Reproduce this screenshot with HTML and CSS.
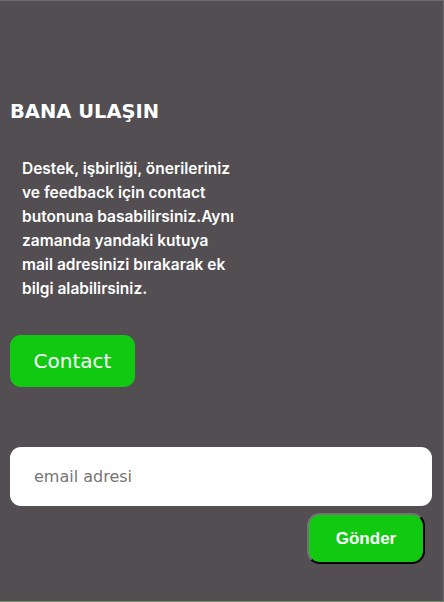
FILE: index.html
```html
<!DOCTYPE html>
<html lang="tr">
<head>
<meta charset="utf-8">
<link rel="stylesheet" href="styles.css">
</head>
<body>
<section class="contact">
  <h2 class="title">BANA ULAŞIN</h2>
  <p class="text">Destek, işbirliği, önerileriniz ve feedback için contact butonuna basabilirsiniz.Aynı zamanda yandaki kutuya mail adresinizi bırakarak ek bilgi alabilirsiniz.</p>
  <button class="contact-btn">Contact</button>
  <form class="mail-form">
    <input class="mail-input" type="text" placeholder="email adresi">
    <button class="send-btn" type="button">Gönder</button>
  </form>
</section>
</body>
</html>
```
FILE: styles.css
```css
html, body {
  margin: 0;
  height: 100%;
}
body {
  background: #524e52;
  font-family: "DejaVu Sans", sans-serif;
  border-top: 1px solid #6e6a6e;
  border-right: 1px solid #6e6a6e;
  border-bottom: 1px solid #6f8f6a;
  box-sizing: border-box;
}
.contact {
  padding: 0 11px 0 10px;
  display: flex;
  flex-direction: column;
}
.title {
  margin: 98px 0 0;
  color: #fff;
  font-size: 19.5px;
  font-weight: 700;
  line-height: 26px;
}
.text {
  margin: 32px 0 0 12px;
  width: 218px;
  color: #fff;
  font-family: Inter, "DejaVu Sans", sans-serif;
  font-size: 15.5px;
  font-weight: 600;
  line-height: 24px;
}
.contact-btn {
  margin-top: 34px;
  align-self: flex-start;
  width: 125px;
  height: 52px;
  border: none;
  border-radius: 11px;
  background: #12c912;
  color: #fff;
  font-family: "DejaVu Sans", sans-serif;
  font-size: 20px;
}
.mail-form {
  margin-top: 60px;
  display: flex;
  flex-direction: column;
}
.mail-input {
  height: 59px;
  box-sizing: border-box;
  border: none;
  border-radius: 11px;
  background: #fff;
  padding: 0 24px;
  font-family: "DejaVu Sans", sans-serif;
  font-size: 16px;
  outline: none;
}
.mail-input::placeholder {
  color: #757575;
}
.send-btn {
  margin: 7px 7px 0 0;
  align-self: flex-end;
  width: 118px;
  height: 51px;
  border: 2px outset #767276;
  border-right-color: #2c2a2c;
  border-bottom-color: #2c2a2c;
  border-radius: 13px;
  background: #12c912;
  color: #fff;
  font-family: "Liberation Sans", Arial, sans-serif;
  font-weight: 700;
  font-size: 17px;
}
```
